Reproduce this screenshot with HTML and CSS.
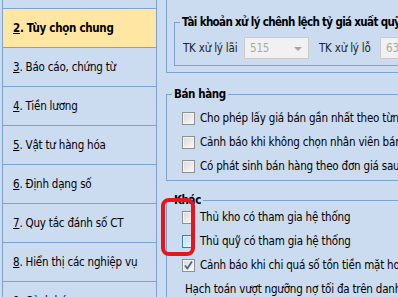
FILE: index.html
```html
<!DOCTYPE html>
<html>
<head>
<meta charset="UTF-8">
<title>Tùy chọn</title>
<link rel="stylesheet" href="styles.css">
</head>
<body>
   <div class="options">
      <ul class="menu">
         <li class="menu-item menu-stub"></li>
         <li class="menu-item active"><u>2</u>. Tùy chọn chung</li>
         <li class="menu-item"><u>3</u>. Báo cáo, chứng từ</li>
         <li class="menu-item"><u>4</u>. Tiền lương</li>
         <li class="menu-item"><u>5</u>. Vật tư hàng hóa</li>
         <li class="menu-item"><u>6</u>. Định dạng số</li>
         <li class="menu-item"><u>7</u>. Quy tắc đánh số CT</li>
         <li class="menu-item"><u>8</u>. Hiển thị các nghiệp vụ</li>
         <li class="menu-item"><u>9</u>. Cảnh báo</li>
      </ul>
      <div class="page">
         <div class="page-top">
            <fieldset class="group rate">
               <legend>Tài khoản xử lý chênh lệch tỷ giá xuất quỹ</legend>
               <div class="tk-row">
                  <label>TK xử lý lãi</label>
                  <div class="combo"><span>515</span><i class="arrow"></i></div>
                  <label class="second">TK xử lý lỗ</label>
                  <div class="combo"><span>635</span><i class="arrow"></i></div>
               </div>
            </fieldset>
         </div>
         <fieldset class="group sales">
            <legend>Bán hàng</legend>
            <div class="check"><span class="box"></span>Cho phép lấy giá bán gần nhất theo từng khách hàng</div>
            <div class="check"><span class="box"></span>Cảnh báo khi không chọn nhân viên bán hàng</div>
            <div class="check"><span class="box"></span>Có phát sinh bán hàng theo đơn giá sau thuế</div>
         </fieldset>
         <fieldset class="group other">
            <legend>Khác</legend>
            <div class="check"><span class="box"></span>Thủ kho có tham gia hệ thống</div>
            <div class="check"><span class="box hover"></span>Thủ quỹ có tham gia hệ thống</div>
            <div class="check"><span class="box checked"><svg width="11" height="11" viewBox="0 0 11 11"><path d="M2 5.5 L4.3 8.5 L9 1.5" fill="none" stroke="#4f6690" stroke-width="1.8"/></svg></span>Cảnh báo khi chi quá số tồn tiền mặt hoặc tiền gửi</div>
            <div class="note">Hạch toán vượt ngưỡng nợ tối đa trên danh mục khách hàng</div>
         </fieldset>
      </div>
   </div>
   <div class="mark"></div>
</body>
</html>
```

FILE: styles.css
```css
body {
  margin: 0;
  padding: 0;
  height: 297px;
  overflow: hidden;
  background-color: #cbdbf0;
  font-family: "DejaVu Sans Condensed", "DejaVu Sans", sans-serif;
  font-stretch: condensed;
  font-size: 11.5px;
  letter-spacing: -0.2px;
  color: #000;
}
.options {
  display: flex;
  align-items: flex-start;
}
.menu {
  list-style: none;
  margin: 0 0 0 2px;
  padding: 0;
  width: 153px;
  flex: none;
  border-left: 1px solid #7ea2d0;
  border-right: 1px solid #7ea2d0;
}
.menu-item {
  height: 38px;
  line-height: 38px;
  padding-left: 10px;
  border-bottom: 1px solid #7ea2d0;
  white-space: nowrap;
}
.menu-item.menu-stub {
  height: 8px;
}
.menu-item.active {
  background-color: #ffe6a2;
  font-weight: bold;
  letter-spacing: -0.3px;
}
.page {
  margin-left: 9px;
  width: 320px;
  flex: none;
}
.page-top {
  border-left: 1px solid #7ea2d0;
  border-bottom: 1px solid #7ea2d0;
  padding: 15px 0 6px 7px;
}
.group {
  margin: 0;
  padding: 0 0 0 5px;
  border: 1px solid #7ea2d0;
  min-width: 0;
}
.group legend {
  padding: 0 2px;
  line-height: 14px;
  font-weight: bold;
  letter-spacing: -0.4px;
  white-space: nowrap;
}
.rate {
  padding-bottom: 6px;
}
.rate legend {
  letter-spacing: -0.65px;
}
.tk-row {
  display: flex;
  align-items: center;
  height: 22px;
  margin-top: 8px;
  padding-left: 3px;
  white-space: nowrap;
}
.tk-row label {
  width: 61px;
  flex: none;
  color: #222;
}
.tk-row label.second {
  margin-left: 10px;
}
.combo {
  position: relative;
  width: 65px;
  height: 22px;
  box-sizing: border-box;
  flex: none;
  border: 1px solid #cbcbcb;
  background-color: #f1f1f1;
  color: #a8a8a8;
  line-height: 20px;
  padding-left: 5px;
}
.combo .arrow {
  position: absolute;
  right: 6px;
  top: 9px;
  border-left: 4px solid transparent;
  border-right: 4px solid transparent;
  border-top: 4px solid #a4a4a4;
}
.sales {
  margin-top: 14px;
  padding-top: 7px;
  padding-bottom: 4px;
}
.other {
  margin-top: 12px;
  padding-bottom: 10px;
}
.sales, .other {
  display: flex;
  flex-direction: column;
  gap: 4px;
}
.check {
  display: flex;
  align-items: center;
  height: 20px;
  padding-left: 10px;
  white-space: nowrap;
}
.box {
  width: 13px;
  height: 13px;
  box-sizing: border-box;
  flex: none;
  margin-right: 5px;
  border: 1px solid #8e8f8f;
  background: linear-gradient(135deg, #d8d8d8, #fbfbfb);
  box-shadow: inset 0 0 0 1px #f4f4f4;
  display: flex;
  align-items: center;
  justify-content: center;
}
.box.hover {
  border-color: #3c7fb1;
  background: linear-gradient(135deg, #b9e2fb, #e6f5fd);
  box-shadow: inset 0 0 0 1px #def0fb;
}
.box svg {
  display: block;
}
.note {
  height: 20px;
  line-height: 20px;
  padding-left: 13px;
  white-space: nowrap;
}
.mark {
  position: absolute;
  left: 161px;
  top: 198px;
  width: 34px;
  height: 58px;
  box-sizing: border-box;
  border: 4px solid #e8141c;
  border-radius: 8px;
}
```
